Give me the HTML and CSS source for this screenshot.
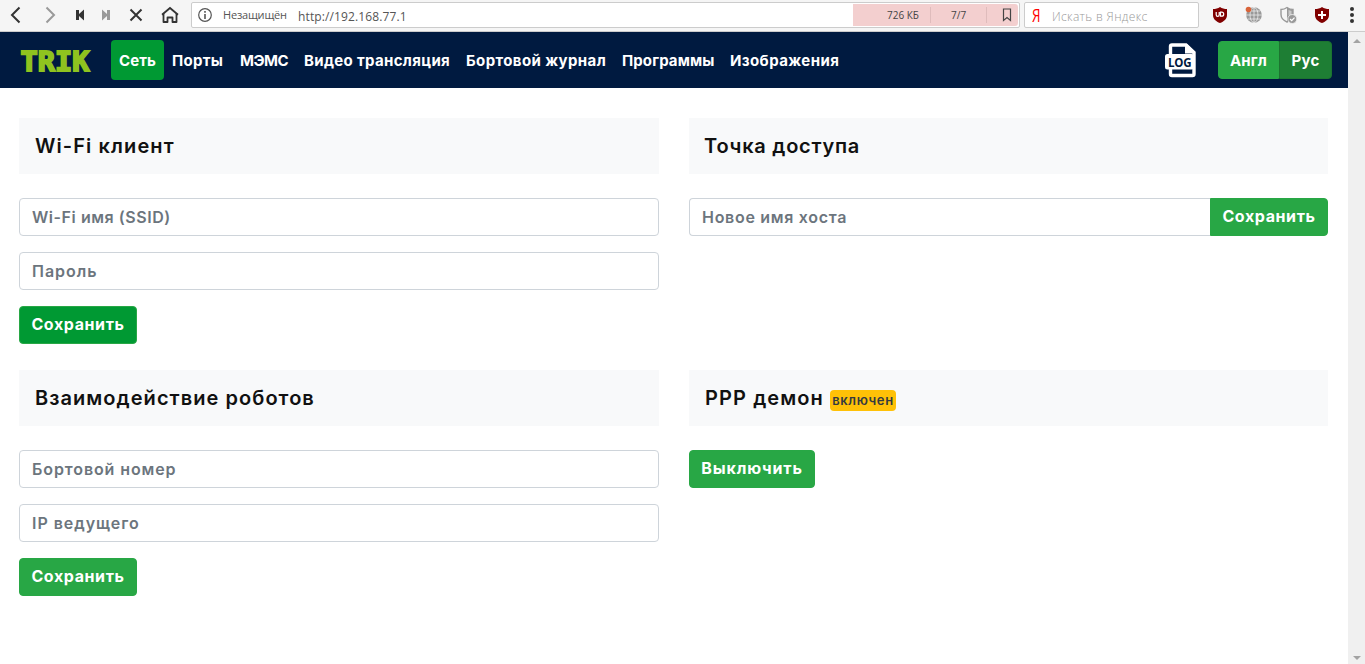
FILE: index.html
```html
<!DOCTYPE html>
<html lang="ru">
<head>
<meta charset="utf-8">
<title>TRIK</title>
<link rel="stylesheet" href="styles.css">
</head>
<body>
<div class="browser">
  <div class="toolbar">
    <svg class="controls" width="191" height="31" viewBox="0 0 191 31" fill="none">
      <path d="M19.5 7.5 12 15l7.500 7.500" stroke="#333" stroke-width="2"/>
      <path d="M46.500 7.500 54 15l-7.500 7.500" stroke="#999" stroke-width="2"/>
      <path d="M76 10h3v4l5-4.500v11L79 16v4h-3z" fill="#333"/>
      <path d="M110 10h-3v4l-5-4.500v11l5-4.500v4h3z" fill="#999"/>
      <path d="M130.500 9.500l11 11m0-11-11 11" stroke="#333" stroke-width="2"/>
      <path d="M163.500 13.500V22h4v-4.500h5V22h4v-8.500" stroke="#333" stroke-width="1.800" stroke-linejoin="round"/>
      <path d="M162 14.800 170 8l8 6.800" stroke="#333" stroke-width="1.800"/>
    </svg>
    <div class="address">
      <svg class="info" width="14" height="14" viewBox="0 0 14 14"><circle cx="7" cy="7" r="6.300" fill="none" stroke="#555" stroke-width="1.200"/><path d="M6.200 3h1.600v1.700H6.200zM6.200 6h1.600v5H6.200z" fill="#555"/></svg>
      <span class="insecure">Незащищён</span>
      <span class="url">http://192.168.77.1</span>
      <div class="stats">
        <span class="size">726 КБ</span>
        <span class="count">7/7</span>
        <span class="mark"><svg width="10" height="14" viewBox="0 0 10 14"><path d="M1.500 1h7v11.500L5 9.500l-3.500 3z" fill="none" stroke="#444" stroke-width="1.200"/></svg></span>
      </div>
    </div>
    <div class="search"><span class="ya">Я</span><span class="hint">Искать в Яндекс</span></div>
    <svg class="extensions" width="166" height="31" viewBox="1199 0 166 31">
      <path d="M1220 7c2 1.500 4.500 2 7 2v6c0 4-3 6.500-7 8-4-1.500-7-4-7-8V9c2.500 0 5-.5 7-2z" fill="#800000"/>
      <path d="M1216.200 12v2.700q0 1.600 1.500 1.600t1.500-1.600V12M1220.500 12.200v4h1.200q2 0 2-2t-2-2z" fill="none" stroke="#fff" stroke-width="1.200"/>
      <circle cx="1254" cy="15" r="7.800" fill="#999"/>
      <g fill="none" stroke="#f5f5f5" stroke-width=".7"><path d="M1254 7v16M1246 15h16M1248 11h12M1248 19h12"/><ellipse cx="1254" cy="15" rx="4" ry="7.500"/></g>
      <circle cx="1248.500" cy="9.500" r="2.800" fill="#d9643a"/>
      <path d="M1287 7.500c2 1.500 4 2 6 2v5c0 3.500-2.500 6-6 7.500-3.500-1.500-6-4-6-7.500v-5c2 0 4-.5 6-2z" fill="#f5f5f5" stroke="#999" stroke-width="1.400"/>
      <path d="M1287 7.500c2 1.500 4 2 6 2v5c0 3.500-2.500 6-6 7.500z" fill="#999"/>
      <path d="M1288.500 10c1 .5 2 .8 3 1v4.500h-3z" fill="#c8c8c8"/>
      <circle cx="1292.300" cy="19" r="4.500" fill="#999" stroke="#f5f5f5" stroke-width=".8"/><path d="m1290.100 19 1.600 1.600 2.800-3" fill="none" stroke="#fff" stroke-width="1.200"/>
      <path d="M1322 7c2 1.500 4.500 2 7 2v6c0 4-3 6.500-7 8-4-1.500-7-4-7-8V9c2.500 0 5-.5 7-2z" fill="#800000"/>
      <path d="M1322 11v8m-4-4h8" stroke="#fff" stroke-width="2"/>
      <g fill="#333"><circle cx="1352" cy="9" r="2"/><circle cx="1352" cy="15" r="2"/><circle cx="1352" cy="21" r="2"/></g>
    </svg>
  </div>
  <div class="viewport">
    <div class="page">
      <header class="navbar">
        <svg class="logo" width="72" height="32" viewBox="0 0 72 32"><text x="0.500" y="26.500" textLength="69" lengthAdjust="spacingAndGlyphs">TRIK</text></svg>
        <nav class="menu">
          <a class="item active n1">Сеть</a><a class="item n2">Порты</a><a class="item n3">МЭМС</a><a class="item n4">Видео трансляция</a><a class="item n5">Бортовой журнал</a><a class="item n6">Программы</a><a class="item n7">Изображения</a>
        </nav>
        <svg class="log" width="31" height="36" viewBox="0 0 31 36">
          <path d="M5.500 12.500V4.500q0-1.500 1.500-1.500H21l8 7.500V32q0 1.500-1.500 1.500H7q-1.500 0-1.500-1.500v-5" fill="none" stroke="#fff" stroke-width="3.400"/>
          <path d="M20 2v9.500h10V10l-8-8z" fill="#fff"/>
          <rect x="0" y="12" width="29" height="15.500" rx="2.500" fill="#fff"/>
          <text x="3" y="24.500" textLength="23.500">LOG</text>
        </svg>
        <div class="langs"><button class="lang">Англ</button><button class="lang chosen">Рус</button></div>
      </header>
      <main class="grid">
        <section class="card">
          <h5 class="title"><span class="t1">Wi-Fi клиент</span></h5>
          <input class="field f1" placeholder="Wi-Fi имя (SSID)">
          <input class="field f2" placeholder="Пароль">
          <button class="btn focus save">Сохранить</button>
        </section>
        <section class="card">
          <h5 class="title"><span class="t2">Точка доступа</span></h5>
          <div class="group"><input class="field f3" placeholder="Новое имя хоста"><button class="btn save">Сохранить</button></div>
        </section>
        <section class="card">
          <h5 class="title"><span class="t3">Взаимодействие роботов</span></h5>
          <input class="field f4" placeholder="Бортовой номер">
          <input class="field f5" placeholder="IP ведущего">
          <button class="btn save">Сохранить</button>
        </section>
        <section class="card">
          <h5 class="title"><span class="t4">PPP демон</span><span class="badge">включен</span></h5>
          <button class="btn off">Выключить</button>
        </section>
      </main>
    </div>
    <div class="scrollbar"><i class="up"></i><i class="down"></i></div>
  </div>
</div>
</body>
</html>
```
FILE: styles.css
```css
* { box-sizing: border-box; }
body { margin: 0; font-family: Inter, "Open Sans", sans-serif; font-size: 16px; line-height: 24px; color: #111; background: #fff; }
button, input { font: inherit; margin: 0; }
.browser { display: flex; flex-direction: column; height: 664px; overflow: hidden; }
.toolbar { display: flex; align-items: flex-start; height: 32px; flex: none; background: #f5f5f5; border-bottom: 1px solid #ccc; font-family: "Open Sans", "Noto Sans", sans-serif; color: #555; white-space: nowrap; }
.controls, .extensions { flex: none; display: block; }
.address { display: flex; align-items: center; width: 829px; height: 26px; margin-top: 2px; padding: 0 1px 0 6px; border: 1px solid #ccc; border-radius: 2px; background: #fff; }
.info { flex: none; }
.insecure { width: 75px; margin-left: 11px; font-size: 11px; letter-spacing: -.2px; }
.url { font-size: 12px; letter-spacing: .12px; padding-top: 3px; }
.stats { display: flex; align-items: center; width: 165px; height: 22px; margin-left: auto; background: #f3cfcf; border-radius: 0 3px 3px 0; font-size: 10px; line-height: 16px; color: #444; }
.size { width: 78px; padding-left: 34px; border-right: 1px solid #dfbcbc; }
.count { width: 56px; padding-left: 20px; border-right: 1px solid #dfbcbc; }
.mark { display: flex; padding-left: 15px; }
.search { display: flex; align-items: center; width: 175px; height: 26px; margin: 2px 0 0 4px; padding-left: 7px; border: 1px solid #ccc; border-radius: 2px; background: #fff; }
.ya { width: 20px; color: #f00; font-size: 18px; transform: scaleX(.75); transform-origin: left; }
.hint { padding-top: 3px; font-size: 12px; letter-spacing: .35px; color: #999; font-weight: 300; }
.viewport { display: flex; flex: 1; }
.page { width: 1348px; }
.navbar { display: flex; align-items: center; height: 56px; padding: 0 16px 0 20px; background: #001a40; color: #fff; font-weight: 700; }
.logo text { font: 700 26px "DejaVu Sans Mono", monospace; fill: #8fc31f; stroke: #8fc31f; stroke-width: 1.800px; }
.menu { display: flex; margin-left: 19px; }
.item { padding: 9px 0 7px 8px; height: 40px; border-radius: 4px; font-size: 15px; white-space: nowrap; }
.active { background: #009933; }
.n1 { width: 53px; letter-spacing: .1px; }
.n2 { width: 68px; letter-spacing: .3px; }
.n3 { width: 64px; letter-spacing: -.5px; }
.n4 { width: 162px; letter-spacing: .33px; }
.n5 { width: 156px; letter-spacing: .4px; }
.n6 { width: 108px; letter-spacing: .1px; }
.n7 { width: 125px; letter-spacing: .4px; }
.log { margin-left: auto; }
.log text { font: 700 11.500px "Open Sans", sans-serif; fill: #001a40; }
.langs { display: flex; margin-left: 22px; }
.lang { height: 38px; width: 61px; padding: 2px 0 0; border: 1px solid #28a745; border-radius: 4px 0 0 4px; background: #28a745; color: #fff; font-size: 15px; letter-spacing: .2px; }
.chosen { width: 53px; background: #1e7e34; border-color: #1c7430; border-radius: 0 4px 4px 0; }
.grid { display: grid; grid-template-columns: 640px 639px; column-gap: 30px; grid-template-rows: 252px 252px; padding: 30px 0 0 19px; }
.card { display: flex; flex-direction: column; align-items: flex-start; }
.title { display: flex; align-items: center; width: 100%; height: 56px; margin: 0 0 24px; padding-left: 16px; background: #f8f9fa; font-size: 20px; font-weight: 600; white-space: nowrap; }
.t1 { letter-spacing: 1.1px; }
.t2 { letter-spacing: .75px; margin-left: -1px; }
.t3 { letter-spacing: 1.05px; }
.t4 { width: 119px; letter-spacing: 1.100px; }
.badge { width: 66px; height: 21px; margin: 5px 0 0 6px; border-radius: 4px; background: #ffc107; color: #343a40; font-size: 13px; line-height: 21px; letter-spacing: .6px; text-align: center; }
.field { width: 100%; height: 38px; margin-bottom: 16px; padding: 6px 12px; border: 1px solid #ced4da; border-radius: 4px; background: #fff; font-weight: 600; }
.field::placeholder { color: #6c757d; opacity: 1; }
.f1 { letter-spacing: .55px; }
.f2 { letter-spacing: 1px; }
.f3 { letter-spacing: .7px; }
.f4 { letter-spacing: .9px; }
.f5 { letter-spacing: .97px; }
.btn { flex: none; height: 38px; padding: 0 0 2px; border: 1px solid #28a745; border-radius: 4px; background: #28a745; color: #fff; font-weight: 700; white-space: nowrap; }
.save { width: 118px; letter-spacing: .6px; }
.off { width: 126px; letter-spacing: .85px; }
.focus { background: #009933; }
.group { display: flex; width: 100%; }
.group .field { flex: 1; border-right: 0; border-radius: 4px 0 0 4px; }
.group .btn { border-radius: 0 4px 4px 0; }
.scrollbar { display: flex; flex-direction: column; justify-content: space-between; align-items: center; width: 17px; padding: 7px 0 4px; background: #f0f0f0; }
.up, .down { border: 4px solid transparent; }
.up { border-top: 0; border-bottom-color: #a3a3a3; }
.down { border-bottom: 0; border-top-color: #a3a3a3; }
```
